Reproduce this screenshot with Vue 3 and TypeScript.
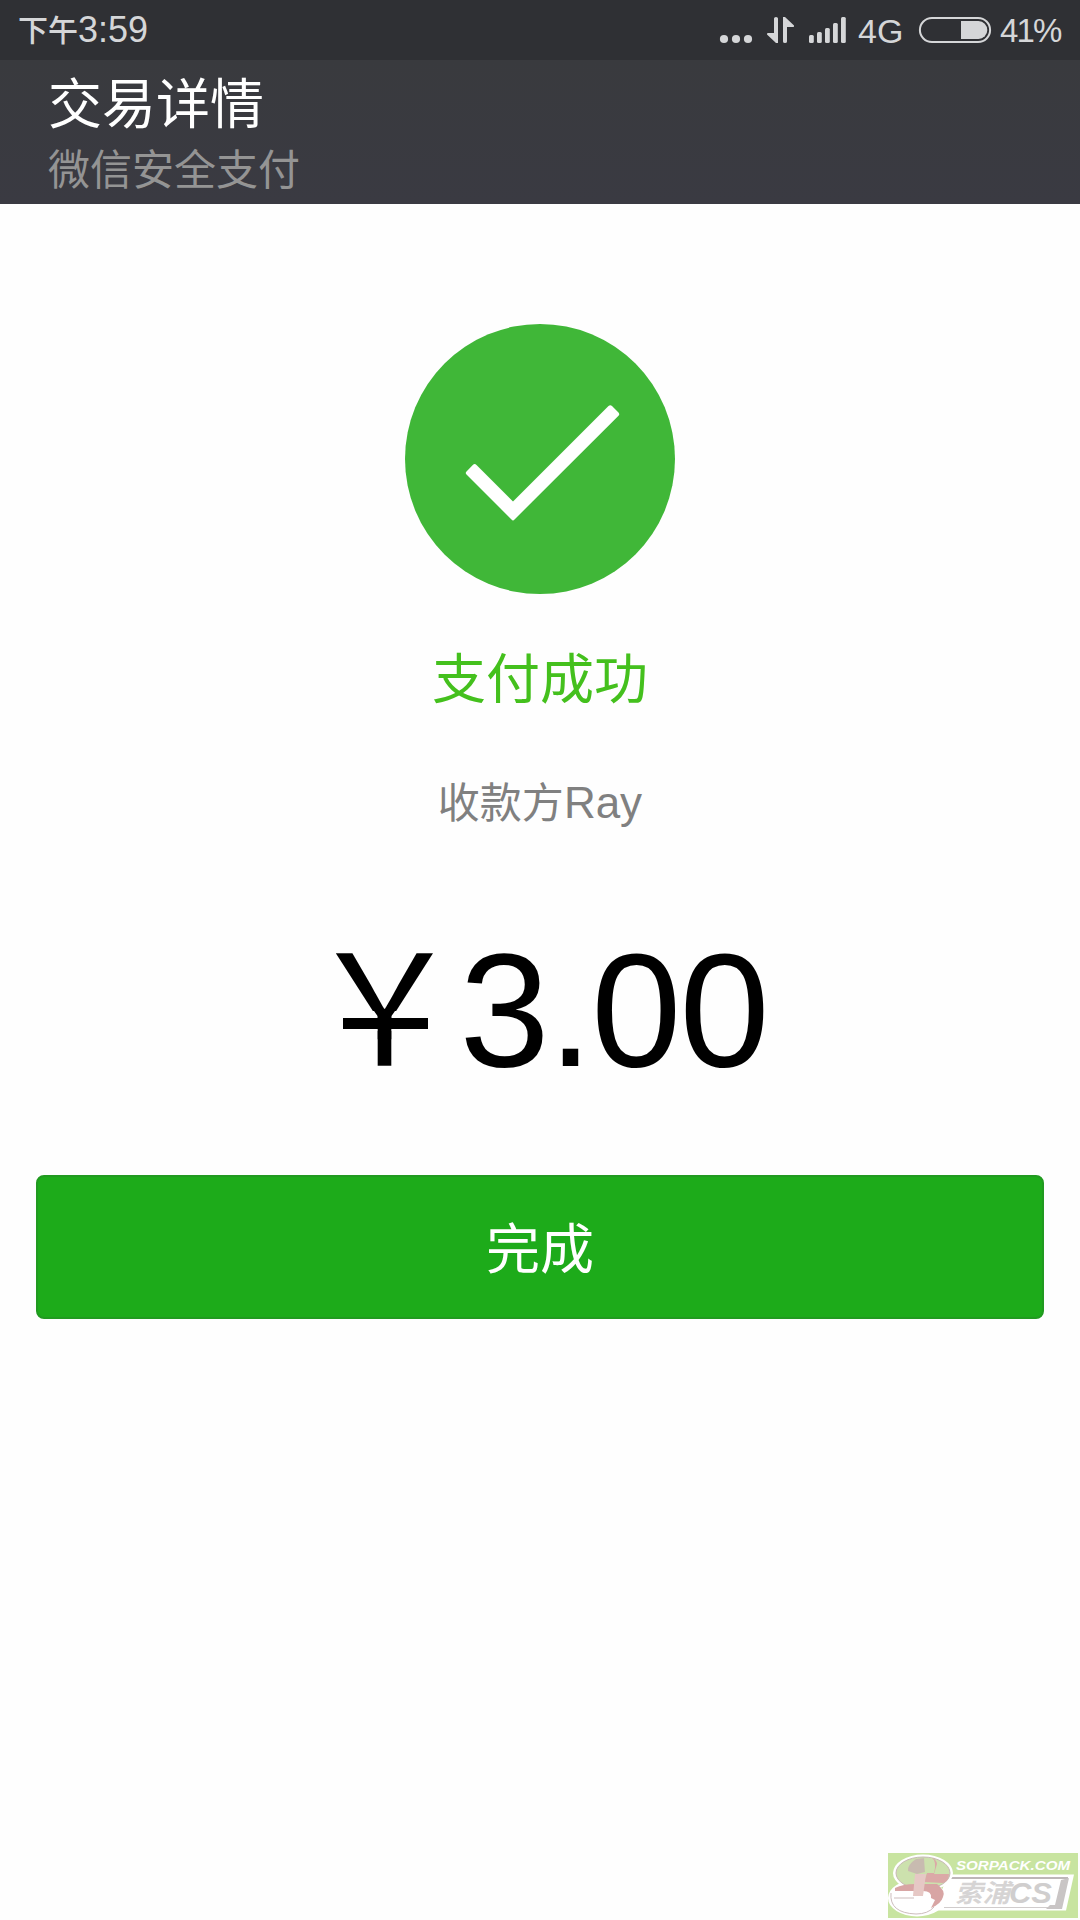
<script setup lang="ts">
interface Bar {
  x: number
  y: number
}

const signalBars: Bar[] = [
  { x: 809, y: 35 },
  { x: 817, y: 32 },
  { x: 825, y: 28 },
  { x: 833, y: 23 },
  { x: 841, y: 17 },
]
const dots: number[] = [724, 736, 748]
</script>

<template>
  <main class="screen">
    <header class="status">
      <div class="clock"><span class="period">下午</span><span class="time">3:59</span></div>
      <div class="indicators">
        <svg class="signals" width="130" height="60" viewBox="719 0 130 60">
          <circle v-for="cx in dots" :key="cx" :cx="cx" cy="39" r="4.1" />
          <path d="M774 18.5Q774 17 776 17Q778 17 778 18.5V43H776L767 34.5Q766.500 33 768 33H774Z" />
          <path d="M783 17H785L794 25.500Q794.500 27 793 27H787V41.500Q787 43 785 43Q783 43 783 41.500Z" />
          <rect
            v-for="bar in signalBars"
            :key="bar.x"
            :x="bar.x"
            :y="bar.y"
            width="4.8"
            :height="43 - bar.y"
            rx="1.5"
          />
        </svg>
        <span class="network">4G</span>
        <svg class="battery" width="74" height="60" viewBox="918 0 74 60">
          <rect x="919.900" y="18" width="70.200" height="24" rx="12" fill="none" stroke="#d5d6d8" stroke-width="2" />
          <path d="M961 21H978.500A8.800 9 0 0 1 978.500 39H961Z" />
        </svg>
        <span class="level">41%</span>
      </div>
    </header>

    <section class="heading">
      <h1>交易详情</h1>
      <p>微信安全支付</p>
    </section>

    <section class="result">
      <svg class="check" width="270" height="270" viewBox="0 0 270 270">
        <circle cx="135" cy="135" r="135" fill="#40b738" />
        <path
          d="M61.500 147.500Q60 149 61.500 150.500L106.500 195.500Q108 197.500 109.500 195.500L213.500 91.800Q215 90.300 213.500 88.500L207 82Q205.300 80.300 203.500 82L108 177.500L71.500 141Q69.700 139.200 67.800 141Z"
          fill="#fff"
        />
      </svg>
      <h2>支付成功</h2>
      <p class="payee">收款方<span>Ray</span></p>
      <div class="amount"><span class="yen"><span class="sign">￥</span></span><span class="value">3.00</span></div>
      <button type="button" class="done">完成</button>
    </section>

    <footer class="brand">
      <svg width="190" height="65" viewBox="0 0 190 65">
        <rect width="190" height="65" fill="#c8e4a0" />
        <path d="M60 21.500H186L178 57.500H46Z" fill="#fff" />
        <path d="M62 25H180" stroke="#bdb7b7" stroke-width="2" />
        <path d="M56 54.500H172" stroke="#d0cccc" />
        <path d="M181 25L174 56H158L162 52H167L173 27Z" fill="#c9c5c5" />
        <ellipse cx="35" cy="20" rx="30" ry="18.500" fill="#fff" />
        <ellipse cx="29" cy="45" rx="29" ry="18.500" fill="#fff" />
        <ellipse cx="35" cy="20" rx="27" ry="16" fill="#cce1ad" stroke="#c6bab4" />
        <path d="M28 6Q19 12 20 18L29 21L37 19V5Z" fill="#c8bbb0" />
        <path d="M37 5H45Q49 8 49 11L46 21H61Q61 28 55 30L36 29L39 20Z" fill="#dba9a7" />
        <path d="M36 5H44Q49 8 46 20H37Z" fill="#cce1ad" />
        <path d="M7 35Q15 31 27 31H49Q58 38 55 44Q53 51 43 55L47 47L43 45Q44 38 35 38H7Z" fill="#d8a5a4" />
        <path d="M27 21H38L35 43H25Z" fill="#e6c8c5" />
        <path d="M3 40Q1 60 28 61Q40 61 46 54M6 45H26" fill="none" stroke="#cdbdbd" />
        <text x="68" y="16.500" class="site" textLength="114" lengthAdjust="spacingAndGlyphs">SORPACK.COM</text>
        <text x="67" y="49" class="name" textLength="55" lengthAdjust="spacingAndGlyphs">索浦</text>
        <text x="121" y="50" class="suffix" textLength="43" lengthAdjust="spacingAndGlyphs">CS</text>
      </svg>
    </footer>
  </main>
</template>

<style>
body {
  background: #fefefe;
}
</style>

<style scoped>
.screen {
  width: 1080px;
  height: 1920px;
  display: flex;
  flex-direction: column;
  background: #fefefe;
  overflow: hidden;
  font-family: "Noto Sans CJK SC", sans-serif;
}
h1,
h2,
p {
  margin: 0;
  font-weight: 400;
}
.status {
  height: 60px;
  flex: none;
  box-sizing: border-box;
  padding: 0 19px 0 18px;
  display: flex;
  justify-content: space-between;
  background: #2f3034;
  color: #d5d6d8;
  fill: #d5d6d8;
}
.clock,
.indicators {
  display: flex;
  height: 60px;
  line-height: 60px;
}
.period {
  font-size: 30px;
  line-height: 57px;
  font-weight: 500;
}
.time,
.network,
.level {
  font-family: "Liberation Sans", sans-serif;
  font-size: 36px;
}
.network {
  width: 46px;
  margin: 1px 14px 0 9px;
  font-size: 34px;
}
.level {
  width: 61px;
  margin: 1px 0 0 8px;
  font-size: 33px;
  letter-spacing: -1.8px;
}
.heading {
  height: 143.500px;
  flex: none;
  box-sizing: border-box;
  padding: 6px 48px 0;
  background: linear-gradient(#393a3e, #3a3a42);
}
h1 {
  height: 70px;
  font-size: 54px;
  line-height: 70px;
  color: #fff;
}
.heading p {
  font-size: 42px;
  line-height: 62px;
  color: #949494;
}
.result {
  display: flex;
  flex-direction: column;
  align-items: center;
  padding: 120.500px 36px 0;
}
.check {
  display: block;
}
h2 {
  margin-top: 44px;
  height: 78px;
  font-size: 54px;
  line-height: 76px;
  color: #44c01d;
}
.payee {
  display: flex;
  margin-top: 54px;
  height: 60px;
  font-size: 42px;
  line-height: 60px;
  color: #808080;
}
.payee span {
  margin-top: 3px;
  font-family: "Liberation Sans", sans-serif;
  font-size: 44px;
}
.amount {
  display: flex;
  margin-top: 86px;
  height: 190px;
  line-height: 188px;
  color: #000;
}
.yen {
  position: relative;
  width: 148px;
  font-size: 155px;
}
/* single-stroke yen: the glyph keeps its arms and stem, the crossbar is drawn below */
.sign {
  display: block;
  width: 155px;
  height: 190px;
  margin: -12px 0 0 -4.500px;
  clip-path: polygon(0 0, 100% 0, 100% 107px, 88px 107px, 84.500px 112px, 84.500px 100%, 70.500px 100%, 70.500px 112px, 67px 107px, 0 107px);
}
.yen::after {
  content: "";
  position: absolute;
  left: 31px;
  top: 102px;
  width: 85px;
  height: 11px;
  background: #000;
}
.value {
  font-family: "Liberation Sans", sans-serif;
  font-size: 162px;
  letter-spacing: -1.7px;
  width: 309px;
}
.done {
  width: 1008px;
  height: 144px;
  margin-top: 69px;
  padding: 0;
  border: 2px solid #219a20;
  border-radius: 8px;
  background: #1dab1a;
  color: #fff;
  font: 400 54px/138px "Noto Sans CJK SC", sans-serif;
}
.done {
  padding-bottom: 3px;
}
.brand {
  display: flex;
  justify-content: flex-end;
  margin-top: auto;
  padding: 0 2px 2px 0;
}
.brand text {
  font-family: "Liberation Sans", "Noto Sans CJK SC", sans-serif;
  font-weight: bold;
  font-style: italic;
}
.site {
  font-size: 13px;
  fill: #fff;
}
.name {
  font-size: 25px;
  fill: #d6d4d4;
}
.suffix {
  font-size: 30px;
  fill: #d0cece;
}
</style>
